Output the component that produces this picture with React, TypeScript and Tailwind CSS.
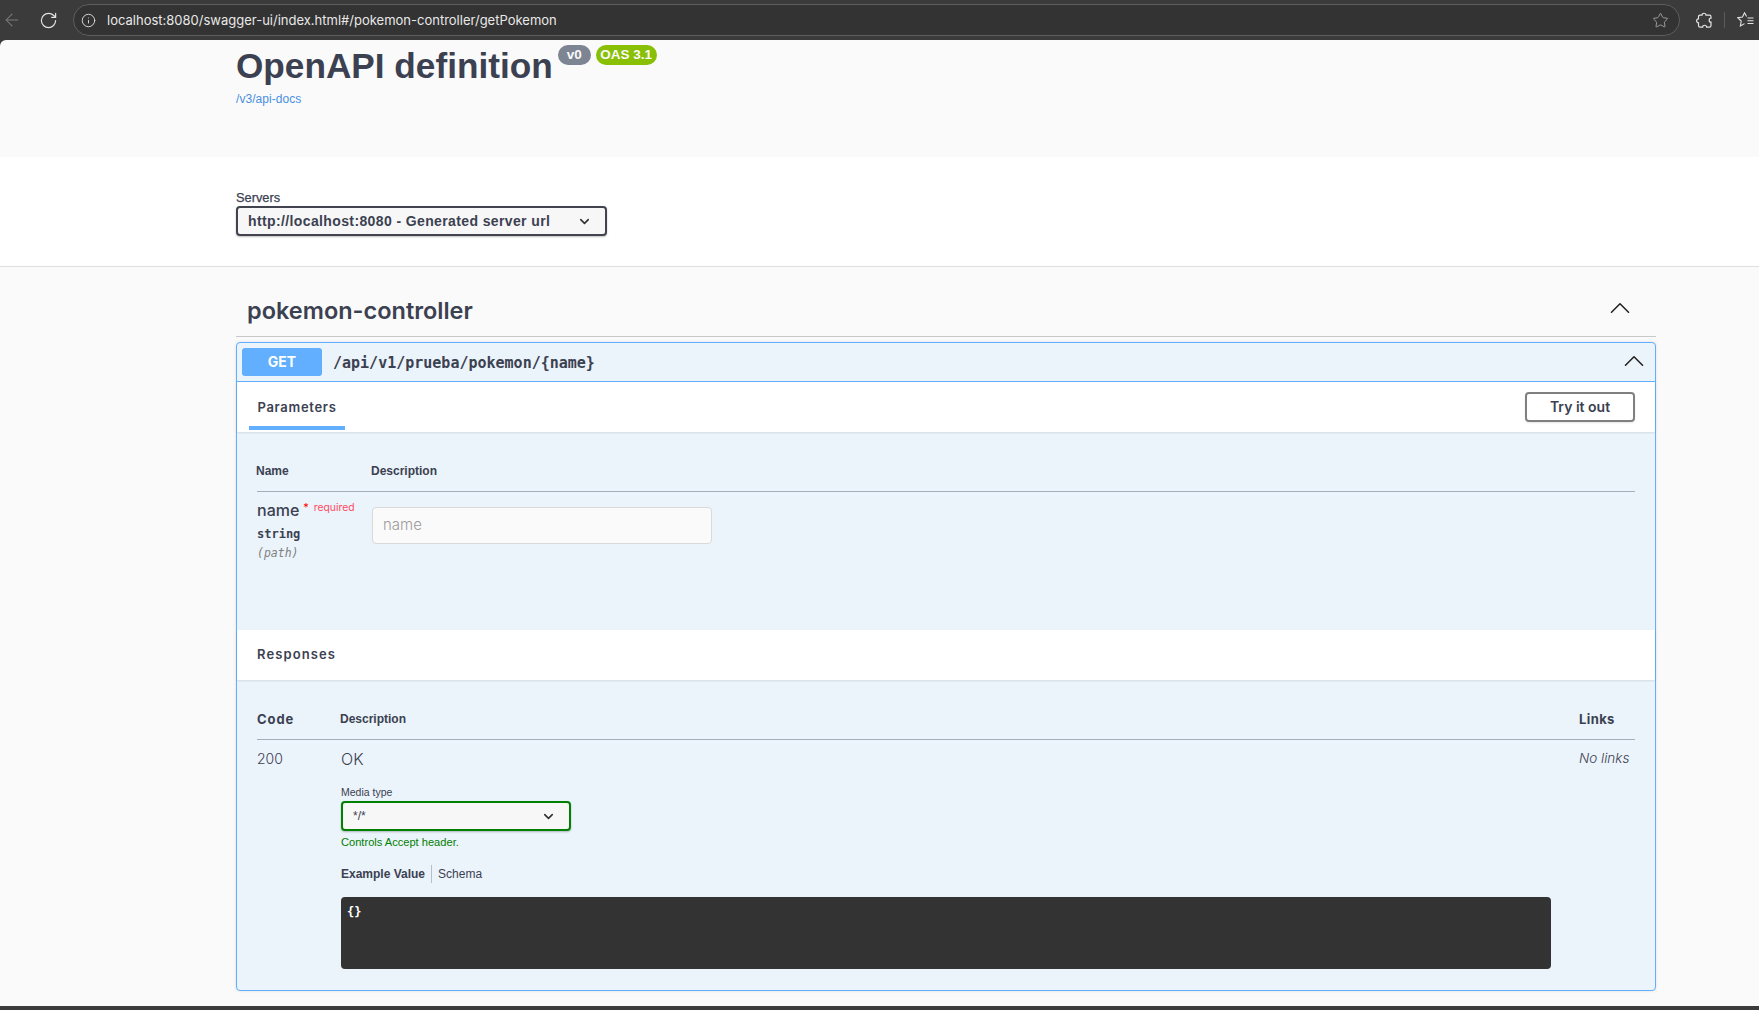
import { ArrowLeft, ChevronDown, ChevronUp, Info, RotateCw, Star } from "lucide-react"

const sans = "font-['Liberation_Sans',Arial,sans-serif]"
const inter = "font-['Inter',sans-serif]"
const mono = "font-['DejaVu_Sans_Mono',monospace]"

function PuzzleIcon() {
  return (
    <svg width="17" height="17" viewBox="0 0 17 17" fill="none" stroke="#e4e4e4" strokeWidth="1.2">
      <path d="M6 3.2 C6 0.6 10 0.6 10 3.2 H13.5 C14.6 3.2 15 3.8 15 4.8 V6.2 C12.6 6.2 12.6 10.2 15 10.2 V13.5 C15 14.6 14.4 15.2 13.4 15.2 H10.6 C10.6 12.6 6.6 12.6 6.6 15.2 H4 C3 15.2 2.5 14.6 2.5 13.6 V10.8 C0 10.8 0 6.8 2.5 6.8 V4.6 C2.5 3.6 3 3.2 4 3.2 Z" />
    </svg>
  )
}

function FavoritesIcon() {
  return (
    <svg width="17" height="16" viewBox="0 0 17 16" fill="none" stroke="#e4e4e4" strokeWidth="1.1">
      <path d="M9.6 4.6 L7.5 0.8 L5.5 5 L0.8 5.7 L4.2 9 L3.4 14 L7.5 11.6" />
      <path d="M10.5 6 H16.5 M10.5 8.7 H16.5 M10.5 11.5 H16.5" />
    </svg>
  )
}

function BrowserBar() {
  return (
    <div className="flex h-10 items-center bg-[#3b3b3b] text-[#e6e6e6]">
      <div className="flex w-[73px] shrink-0 items-center pl-[2px]">
        <ArrowLeft size={20} strokeWidth={1.25} className="text-[#7c7c7c]" />
        <RotateCw size={19} strokeWidth={1.5} className="ml-[17px] shrink-0 text-[#e4e4e4]" />
      </div>
      <div className="flex h-8 w-[1607px] items-center rounded-full border border-[#5d5d5d] bg-[#333333] pl-[7px] pr-[10px]">
        <Info size={15} strokeWidth={1.5} className="text-[#dddddd]" />
        <span className={`ml-[11px] mt-[1px] text-[13px] text-[#e8e8e8] ${inter}`}>
          localhost:8080/swagger-ui/index.html#/pokemon-controller/getPokemon
        </span>
        <Star size={17} strokeWidth={1.25} className="ml-auto text-[#a8a8a8]" />
      </div>
      <div className="ml-[16px] flex items-center">
        <PuzzleIcon />
        <div className="ml-[11px] h-4 w-px bg-[#5a5a5a]" />
        <div className="ml-[12px]">
          <FavoritesIcon />
        </div>
      </div>
    </div>
  )
}

function ApiInfo() {
  return (
    <div className="h-[117px] rounded-tl-[6px] bg-[#fafafa] pl-[236px]">
      <div className="flex items-start">
        <h1 className={`mt-[3px] text-[35.2px] font-bold leading-[45px] text-[#3b4151] ${sans}`}>OpenAPI definition</h1>
        <span className={`ml-[5px] mt-[5px] flex h-5 w-[33px] items-center justify-center rounded-[10px] bg-[#7d8492] text-[13.5px] font-bold text-[#fafafa] ${sans}`}>
          v0
        </span>
        <span className={`ml-[5px] mt-[5px] flex h-5 w-[61px] items-center justify-center rounded-[10px] bg-[#89bf04] text-[13.5px] font-bold text-[#fafafa] ${sans}`}>
          OAS 3.1
        </span>
      </div>
      <a className={`mt-[3px] block text-[12px] leading-[16px] tracking-[0.05px] text-[#4990e2] ${sans}`}>/v3/api-docs</a>
    </div>
  )
}

function Servers() {
  return (
    <div className="h-[110px] border-b border-[#dfdfdf] bg-white pl-[236px] pt-[34px] shadow-[0_1px_2px_rgba(0,0,0,0.05)]">
      <div className={`text-[12.8px] leading-[14px] text-[#3b4151] ${sans} [-webkit-text-stroke:0.25px_#3b4151]`}>Servers</div>
      <div className={`mt-[1px] flex h-[30px] w-[371px] items-center justify-between rounded-[4px] border-2 border-[#41444e] bg-[#f7f7f7] pl-[10px] pr-[13px] text-[14px] font-bold tracking-[0.38px] text-[#3b4151] shadow-[0_1px_2px_rgba(0,0,0,0.25)] ${sans}`}>
        http://localhost:8080 - Generated server url
        <ChevronDown size={15} strokeWidth={2.5} className="text-[#303030]" />
      </div>
    </div>
  )
}

function ParamsTable() {
  return (
    <div className="h-[198px] px-5 pt-[31px]">
      <div className={`flex h-[29px] border-b border-[#a7adba] text-[12px] font-bold leading-4 text-[#3b4151] ${sans}`}>
        <span className="ml-[-1px] w-[115px]">Name</span>
        <span>Description</span>
      </div>
      <div className="flex pt-2">
        <div className="w-[115px]">
          <div className="flex items-start">
            <span className={`text-[16px] font-medium leading-[20px] text-[#3b4151] ${inter}`}>name</span>
            <span className={`ml-[4px] text-[11px] leading-[14px] text-[#ff0000] ${inter}`}>*</span>
            <span className={`ml-[5px] text-[10.3px] leading-[14px] text-[#ff4a5f] ${inter}`}>required</span>
          </div>
          <div className={`mt-[5px] text-[12px] font-semibold leading-[18px] text-[#3b4151] ${mono}`}>string</div>
          <div className={`mt-[1px] text-[11.5px] italic leading-[18px] text-[#808080] ${mono}`}>(path)</div>
        </div>
        <div className="mt-[7px] flex h-[37px] w-[340px] items-center rounded-[4px] border border-[#d9d9d9] bg-[#fafafa] pl-[10px]">
          <span className={`text-[15px] font-light text-[#9a9a9a] ${inter}`}>name</span>
        </div>
      </div>
    </div>
  )
}

function ResponsesTable() {
  return (
    <div className="px-5 pt-[29px]">
      <div className="flex h-[31px] border-b border-[#a7adba] text-[12px] font-bold leading-5 text-[#3b4151]">
        <span className={`w-[84px] text-[13px] tracking-[0.9px] ${inter}`}>Code</span>
        <span className={`ml-[-1px] ${sans}`}>Description</span>
        <span className={`ml-auto w-[56px] text-[13px] tracking-[0.4px] ${inter}`}>Links</span>
      </div>
      <div className="flex pt-2">
        <div className={`w-[84px] text-[14px] font-light leading-[22px] text-[#3b4151] ${inter}`}>200</div>
        <div className="w-[1210px]">
          <div className={`text-[16px] font-light leading-[22px] text-[#3b4151] ${inter}`}>OK</div>
          <div className={`mt-[15px] text-[10.5px] leading-[14px] text-[#3b4151] ${sans}`}>Media type</div>
          <div className={`mt-[2px] flex h-[30px] w-[230px] items-center justify-between rounded-[4px] border-2 border-[#008000] bg-[#f7f7f7] pl-[10px] pr-[13px] text-[12px] text-[#3b4151] shadow-[0_1px_2px_rgba(0,0,0,0.25)] ${sans}`}>
            */*
            <ChevronDown size={15} strokeWidth={2.5} className="text-[#303030]" />
          </div>
          <div className={`mt-[4px] text-[11.1px] leading-[14px] text-[#008000] ${sans}`}>Controls Accept header.</div>
          <div className={`mt-[17px] flex h-[15px] items-center text-[12px] text-[#3b4151] ${sans}`}>
            <span className="border-r border-[#b9bec8] pr-[6px] font-bold">Example Value</span>
            <span className="pl-[6px]">Schema</span>
          </div>
          <div className="mt-4 h-[72px] rounded-[4px] bg-[#333333] pl-[6px] pt-[1px]">
            <span className={`text-[12px] font-bold leading-[16px] text-white ${mono}`}>{"{}"}</span>
          </div>
        </div>
        <div className={`pl-[28px] text-[13.5px] font-light italic leading-[20px] text-[#3b4151] ${inter}`}>No links</div>
      </div>
    </div>
  )
}

function Operation() {
  return (
    <div className="mt-[5px] h-[649px] rounded-[4px] border border-[#61affe] bg-[#ebf3fb] shadow-[0_0_3px_rgba(0,0,0,0.12)]">
      <div className="flex h-[39px] items-center border-b border-[#61affe] pl-[5px] pr-[4px]">
        <span className={`flex h-[28px] w-[80px] items-center justify-center rounded-[3px] bg-[#61affe] pb-[1px] text-[14px] font-bold text-white ${inter}`}>GET</span>
        <span className={`ml-[11px] mt-[2px] text-[15px] font-semibold text-[#3b4151] ${mono}`}>/api/v1/prueba/pokemon/{"{name}"}</span>
        <ChevronUp size={34} strokeWidth={1.1} className="ml-auto mb-[2px] text-[#222222]" />
      </div>
      <div className="flex h-[50px] items-start justify-between bg-white pl-[12px] pr-[20px] shadow-[0_1px_2px_rgba(0,0,0,0.1)]">
        <span className={`flex h-[48px] w-[96px] items-center justify-center border-b-4 border-[#61affe] pt-[7px] text-[13px] font-semibold tracking-[0.7px] text-[#3b4151] ${inter}`}>
          Parameters
        </span>
        <button className={`mt-[10px] h-[30px] w-[110px] rounded-[4px] border-2 border-[#808080] pb-[2px] text-[14px] font-semibold text-[#3b4151] shadow-[0_1px_2px_rgba(0,0,0,0.1)] ${inter}`}>
          Try it out
        </button>
      </div>
      <ParamsTable />
      <div className="flex h-[50px] items-center bg-white pl-5 shadow-[0_1px_2px_rgba(0,0,0,0.1)]">
        <span className={`text-[13px] font-semibold tracking-[1.1px] text-[#3b4151] ${inter}`}>Responses</span>
      </div>
      <ResponsesTable />
    </div>
  )
}

export default function App() {
  return (
    <div className="flex h-[1010px] w-full flex-col overflow-hidden bg-[#3b3b3b]">
      <BrowserBar />
      <ApiInfo />
      <Servers />
      <div className="h-[739px] bg-[#fafafa] pl-[236px] pr-[103px]">
        <div className="flex h-[70px] items-center border-b border-[#c9c9c9] pl-[11px] pr-[19px] pt-[19px]">
          <h2 className={`text-[23.5px] font-semibold text-[#3b4151] ${inter}`}>pokemon-controller</h2>
          <ChevronUp size={34} strokeWidth={1.1} className="ml-auto mb-[6px] text-[#222222]" />
        </div>
        <Operation />
      </div>
    </div>
  )
}
